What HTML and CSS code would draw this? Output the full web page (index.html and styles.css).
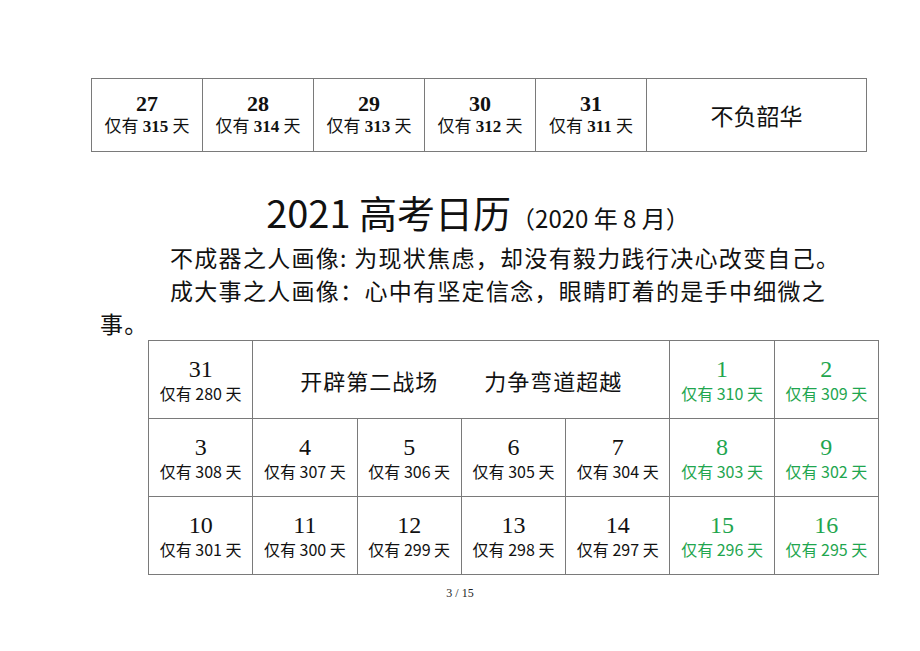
FILE: index.html
```html
<!DOCTYPE html>
<html lang="zh">
<head>
<meta charset="utf-8">
<link rel="stylesheet" href="styles.css">
</head>
<body>
<div class="page">
  <table class="top">
    <tr>
      <td class="d"><div class="n">27</div><div class="s">仅有 <b>315</b> 天</div></td>
      <td class="d"><div class="n">28</div><div class="s">仅有 <b>314</b> 天</div></td>
      <td class="d"><div class="n">29</div><div class="s">仅有 <b>313</b> 天</div></td>
      <td class="d"><div class="n">30</div><div class="s">仅有 <b>312</b> 天</div></td>
      <td class="d"><div class="n">31</div><div class="s">仅有 <b>311</b> 天</div></td>
      <td class="motto">不负韶华</td>
    </tr>
  </table>

  <h1 class="title">2021 高考日历<span class="sub">（2020 年 8 月）</span></h1>
  <p class="para first">不成器之人画像: 为现状焦虑，却没有毅力践行决心改变自己。</p>
  <p class="para">成大事之人画像：心中有坚定信念，眼睛盯着的是手中细微之事。</p>

  <table class="cal">
    <tr>
      <td><div class="n">31</div><div class="s">仅有 280 天</div></td>
      <td colspan="4" class="slogan">开辟第二战场　　力争弯道超越</td>
      <td class="g"><div class="n">1</div><div class="s">仅有 310 天</div></td>
      <td class="g"><div class="n">2</div><div class="s">仅有 309 天</div></td>
    </tr>
    <tr>
      <td><div class="n">3</div><div class="s">仅有 308 天</div></td>
      <td><div class="n">4</div><div class="s">仅有 307 天</div></td>
      <td><div class="n">5</div><div class="s">仅有 306 天</div></td>
      <td><div class="n">6</div><div class="s">仅有 305 天</div></td>
      <td><div class="n">7</div><div class="s">仅有 304 天</div></td>
      <td class="g"><div class="n">8</div><div class="s">仅有 303 天</div></td>
      <td class="g"><div class="n">9</div><div class="s">仅有 302 天</div></td>
    </tr>
    <tr>
      <td><div class="n">10</div><div class="s">仅有 301 天</div></td>
      <td><div class="n">11</div><div class="s">仅有 300 天</div></td>
      <td><div class="n">12</div><div class="s">仅有 299 天</div></td>
      <td><div class="n">13</div><div class="s">仅有 298 天</div></td>
      <td><div class="n">14</div><div class="s">仅有 297 天</div></td>
      <td class="g"><div class="n">15</div><div class="s">仅有 296 天</div></td>
      <td class="g"><div class="n">16</div><div class="s">仅有 295 天</div></td>
    </tr>
  </table>

  <div class="pageno">3 / 15</div>
</div>
</body>
</html>
```

FILE: styles.css
```css
html, body {
  margin: 0;
  padding: 0;
  background: #fff;
}
body {
  font-family: "Liberation Serif", "Noto Sans CJK SC", serif;
  color: #111;
  width: 920px;
  height: 651px;
  overflow: hidden;
}
.page {
  padding-top: 78px;
}
table {
  border-collapse: collapse;
  table-layout: fixed;
}
td {
  border: 1px solid #7a7a7a;
  text-align: center;
  vertical-align: middle;
  padding: 0;
}
.top {
  margin-left: 91px;
  width: 776px;
}
.top td {
  height: 72px;
}
.top td.d {
  width: 110px;
}
.top .n {
  font-weight: bold;
  font-size: 22px;
  line-height: 24px;
}
.top .s {
  font-size: 17px;
  line-height: 22px;
  font-family: "Liberation Serif", "Noto Sans CJK SC", serif;
}
.top .s b {
  font-weight: bold;
}
.top .motto {
  font-family: "Noto Sans CJK SC", sans-serif;
  font-size: 23px;
}
.title {
  margin: 40px 0 0 0;
  text-align: center;
  font-family: "Noto Sans CJK SC", sans-serif;
  font-weight: normal;
  font-size: 38px;
  line-height: 40px;
  padding-left: 36px;
  letter-spacing: 0;
}
.title .sub {
  font-size: 24px;
  line-height: 20px;
  letter-spacing: 0;
}
.para {
  margin: 0;
  margin-left: 100px;
  width: 745px;
  text-indent: 70px;
  font-family: "Noto Sans CJK SC", sans-serif;
  font-size: 23px;
  line-height: 33px;
  letter-spacing: 1.3px;
}
.para.first {
  margin-top: 9px;
}
.cal {
  margin-left: 148px;
  width: 731px;
}
.cal td {
  height: 77px;
}
.cal .n {
  font-size: 24px;
  line-height: 26px;
}
.cal .s {
  font-size: 16px;
  line-height: 22px;
  font-family: "Noto Sans CJK SC", sans-serif;
}
.cal .slogan {
  font-family: "Noto Sans CJK SC", sans-serif;
  font-size: 22px;
  letter-spacing: 1px;
}
.cal .g {
  color: #1fa64f;
}
.pageno {
  margin-top: 11px;
  text-align: center;
  font-size: 12px;
  color: #222;
}
```
